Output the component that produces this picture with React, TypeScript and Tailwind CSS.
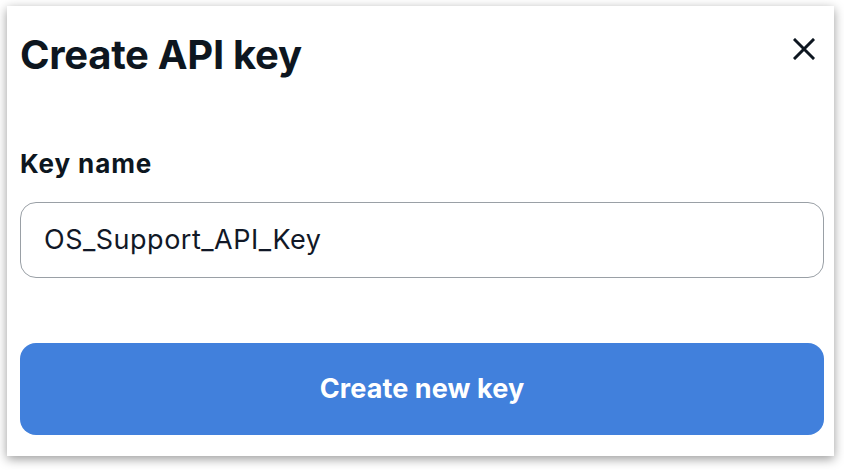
export default function App() {
  return (
    <div className="w-[844px] h-[470px] bg-white pt-[6px] pl-[7px] font-['Inter',sans-serif]">
      <div className="w-[827px] h-[450px] bg-white shadow-[0_3px_10px_rgba(0,0,0,0.4)] pl-[13px] pr-[10px] pt-[25px] flex flex-col">
        <div className="flex items-start justify-between">
          <h1 className="text-[40px] leading-[48px] font-bold text-[#0d1620] tracking-[-0.3px]">Create API key</h1>
          <button className="mt-[7px] mr-[9px] text-[#0d1620]">
            <svg width="22" height="22" viewBox="0 0 22 22" fill="none" stroke="currentColor" strokeWidth="3" strokeLinecap="square">
              <path d="M2 2 20 20M20 2 2 20" />
            </svg>
          </button>
        </div>
        <label className="mt-[70px] text-[26px] leading-[30px] font-bold text-[#0d1620] tracking-[0.9px]">Key name</label>
        <div className="mt-[23px] h-[76px] rounded-[16px] border border-[#9aa0a6] flex items-center px-[23px]">
          <span className="text-[27px] text-[#111827] tracking-[0.5px]">OS_Support_API_Key</span>
        </div>
        <button className="mt-[65px] h-[92px] rounded-[16px] bg-[#4180dc] text-white text-[27px] font-bold tracking-[0.1px]">
          Create new key
        </button>
      </div>
    </div>
  )
}
